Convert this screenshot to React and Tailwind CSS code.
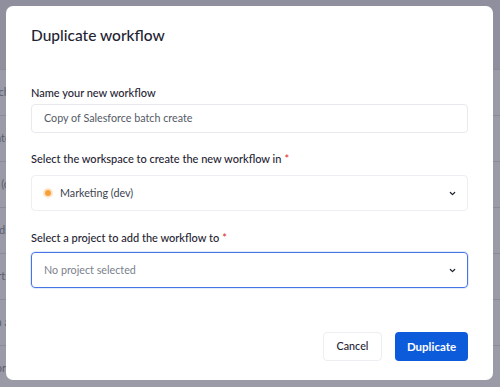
import React from 'react';

const rows = ['batch', 'Invoice update', 'Sync (d', 'Leads', 'Slack alerts', 'Data a', 'Export'];

const Chevron = () => (
  <svg width="9" height="9" viewBox="0 0 10 10" fill="none">
    <path d="M2.6 3.9L5 6.2L7.4 3.9" stroke="#1f2433" strokeWidth="1.4" strokeLinecap="round" strokeLinejoin="round" />
  </svg>
);

const Label = ({ children, required }) => (
  <p className="text-[11px] font-medium text-[#1f2433] leading-4">
    {children}
    {required && <span className="text-[#e0322f] ml-[3px]">*</span>}
  </p>
);

export default function App() {
  return (
    <div className="relative w-[500px] h-[387px] overflow-hidden bg-[#8f8f9e] font-['Lato',sans-serif]">
      {/* Page behind the overlay */}
      <div className="flex flex-col pt-[69px]">
        {rows.map((r) => (
          <div key={r} className="h-[46px] flex items-center border-t border-[#8a8a98] bg-[#9a9ba7] text-[11px] text-[#5c5e6e] whitespace-nowrap">
            <span className="-ml-[60px] w-[70px] text-right">{r}</span>
          </div>
        ))}
      </div>

      {/* Modal */}
      <div className="absolute inset-0 pl-[6px] pt-[6px] pr-[7px] pb-[7px]">
        <div className="h-full bg-white rounded-[7px] flex flex-col px-[25px] pt-[17px]">
          <h2 className="text-[15.5px] font-medium text-[#1f2433] leading-6">Duplicate workflow</h2>

          <div className="mt-[38px] flex flex-col gap-[3px]">
            <Label>Name your new workflow</Label>
            <div className="h-[29px] border border-[#e7e9ed] rounded-[4px] flex items-center px-[12px] text-[10.75px] text-[#555a66]">
              Copy of Salesforce batch create
            </div>
          </div>

          <div className="mt-[18px] flex flex-col gap-[8px]">
            <Label required>Select the workspace to create the new workflow in</Label>
            <div className="h-[36px] border border-[#eceef1] rounded-[4px] flex items-center justify-between pl-[11px] pr-[10px] text-[10.75px] text-[#3d4250]">
              <div className="flex items-center gap-[7px]">
                <span className="w-[10px] h-[10px] rounded-full bg-[#fde6cb] flex items-center justify-center">
                  <span className="w-[6px] h-[6px] rounded-full bg-[#f8a139]" />
                </span>
                <span>Marketing (dev)</span>
              </div>
              <Chevron />
            </div>
          </div>

          <div className="mt-[19px] flex flex-col gap-[6px]">
            <Label required>Select a project to add the workflow to</Label>
            <div className="h-[36px] border-[1.5px] border-[#4676e6] rounded-[4px] flex items-center justify-between pl-[12px] pr-[10px] text-[10.75px] text-[#7a7f8b] shadow-[0_0_0_1px_rgba(70,118,230,0.15)]">
              <span>No project selected</span>
              <Chevron />
            </div>
          </div>

          <div className="mt-auto mb-[19px] flex justify-end gap-[13px]">
            <button className="h-[29px] w-[59px] border border-[#eceef1] rounded-[4px] text-[10.75px] font-medium text-[#1f2433] bg-white">
              Cancel
            </button>
            <button className="h-[29px] w-[73px] rounded-[4px] text-[11.5px] font-bold text-white bg-[#0b5bdb]">
              Duplicate
            </button>
          </div>
        </div>
      </div>
    </div>
  );
}
